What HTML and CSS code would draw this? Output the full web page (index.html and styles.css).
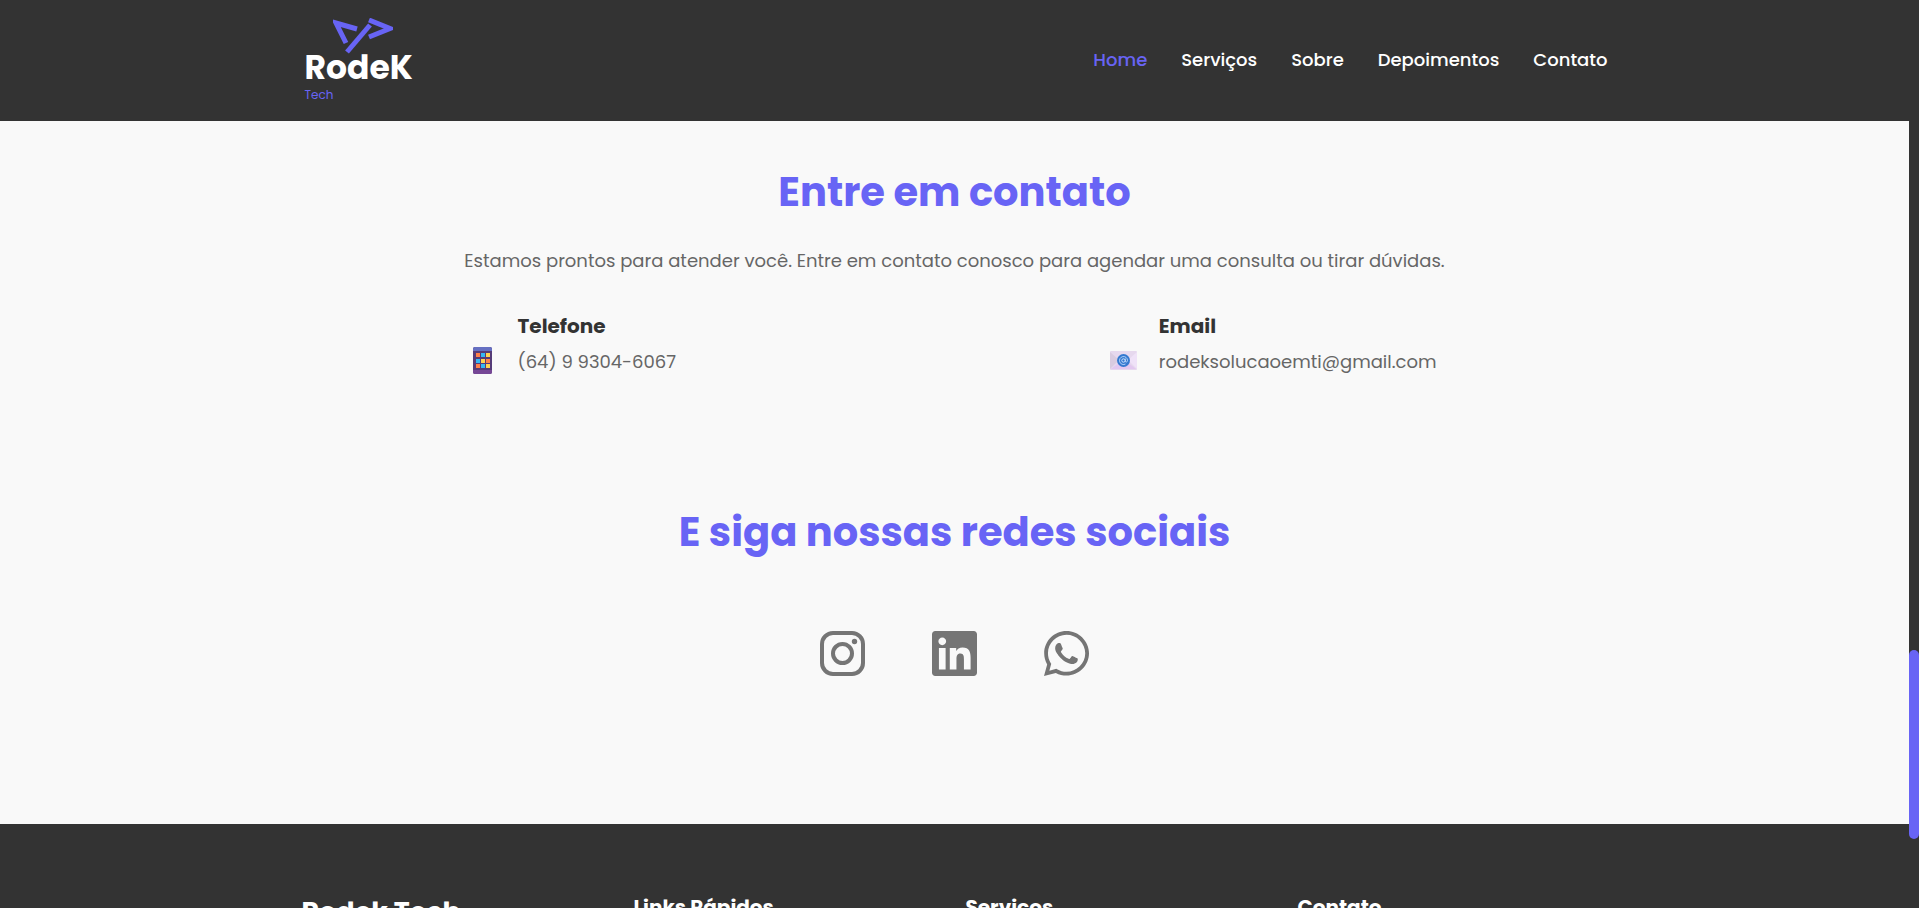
FILE: index.html
```html
<!DOCTYPE html>
<html lang="pt-BR">
<head>
<meta charset="utf-8">
<meta name="viewport" content="width=device-width, initial-scale=1">
<title>RodeK Tech</title>
<link rel="stylesheet" href="styles.css">
</head>
<body class="shell">
<div class="page">
  <header class="header">
    <div class="container header-row">
      <a class="logo" href="#" aria-label="RodeK Tech">
        <svg class="logo-mark" viewBox="0 0 60 36" aria-hidden="true">
          <g fill="none" stroke="#6864f5" stroke-width="5">
            <path d="M24 11 3 5 13 25"/>
            <path d="M14 34 37 7"/>
            <path d="M36 2 57 10.500 36 19"/>
          </g>
        </svg>
        <span class="logo-name">RodeK</span>
        <span class="logo-sub">Tech</span>
      </a>
      <nav class="nav">
        <a class="nav-link active" href="#home">Home</a>
        <a class="nav-link" href="#servicos">Serviços</a>
        <a class="nav-link" href="#sobre">Sobre</a>
        <a class="nav-link" href="#depoimentos">Depoimentos</a>
        <a class="nav-link" href="#contato">Contato</a>
      </nav>
    </div>
  </header>

  <main class="main" id="contato">
    <section class="contact">
      <h2 class="title">Entre em contato</h2>
      <p class="lead">Estamos prontos para atender você. Entre em contato conosco para agendar uma consulta ou tirar dúvidas.</p>
      <div class="contact-list">
        <div class="contact-item">
          <svg class="contact-icon" viewBox="0 0 27 27" aria-hidden="true">
            <rect x="4" y="0" width="19" height="27" rx="2" fill="#553c78"/>
            <path d="M6 0h15a2 2 0 0 1 2 2v2H4V2a2 2 0 0 1 2-2z" fill="#6670c2"/>
            <path d="M4 23h19v2a2 2 0 0 1-2 2H6a2 2 0 0 1-2-2z" fill="#764796"/>
            <path d="M7 6h4v4H7zM17 12h4v4h-4zM7 17h4v4H7z" fill="#ff8148"/>
            <path d="M12 6h4v4h-4zM7 12h4v4H7zM12 17h4v4h-4z" fill="#35b8f4"/>
            <path d="M17 6h4v4h-4zM12 12h4v4h-4zM17 17h4v4h-4z" fill="#ffd34e"/>
          </svg>
          <div>
            <h3 class="contact-title">Telefone</h3>
            <p class="contact-text">(64) 9 9304-6067</p>
          </div>
        </div>
        <div class="contact-item">
          <svg class="contact-icon" viewBox="0 0 27 27" aria-hidden="true">
            <rect x="0" y="4" width="27" height="19" rx="1" fill="#e6d8ee"/>
            <path d="M0 5 9 13 0 22z" fill="#d9cbe0"/>
            <path d="M27 5 18 13 27 22z" fill="#efe2f8"/>
            <path d="M1 22 10 15h7l9 7z" fill="#e2c8f0"/>
            <circle cx="13.500" cy="13.500" r="6.500" fill="#3479d0"/>
            <circle cx="13.500" cy="13.500" r="1.700" fill="none" stroke="#cfe4ff"/>
            <path d="M15.300 11.500v2.500c0 1.600 2.200 1.400 2.200-.5a4 4 0 1 0-2 3.500" fill="none" stroke="#cfe4ff" stroke-width=".8"/>
          </svg>
          <div>
            <h3 class="contact-title">Email</h3>
            <p class="contact-text">rodeksolucaoemti@gmail.com</p>
          </div>
        </div>
      </div>
    </section>

    <section class="social">
      <h2 class="title">E siga nossas redes sociais</h2>
      <div class="social-list">
        <a class="social-link" href="#" aria-label="Instagram">
          <svg viewBox="0 0 45 45" aria-hidden="true">
            <rect x="2" y="2" width="41" height="41" rx="11" fill="none" stroke="currentColor" stroke-width="4"/>
            <circle cx="22.500" cy="22.500" r="9.500" fill="none" stroke="currentColor" stroke-width="4"/>
            <circle cx="34.500" cy="10.500" r="2.700" fill="currentColor"/>
          </svg>
        </a>
        <a class="social-link" href="#" aria-label="LinkedIn">
          <svg viewBox="0 0 448 448" aria-hidden="true">
            <path fill="currentColor" fill-rule="evenodd" d="M416 0H31.900C14.300 0 0 14.500 0 32.300v383.400C0 433.500 14.300 448 31.900 448H416c17.600 0 32-14.500 32-32.300V32.300C448 14.500 433.600 0 416 0zM135.400 384H69V170.200h66.500V384zM102.200 141c-21.300 0-38.500-17.300-38.500-38.500S80.900 64 102.200 64c21.200 0 38.500 17.300 38.500 38.500 0 21.300-17.200 38.500-38.500 38.500zM384.300 384h-66.400V280c0-24.800-.5-56.700-34.500-56.700-34.600 0-39.900 27-39.900 54.900V384h-66.400V170.200h63.700v29.200h.9c8.900-16.800 30.600-34.500 62.900-34.500 67.200 0 79.700 44.300 79.700 101.900V384z"/>
          </svg>
        </a>
        <a class="social-link" href="#" aria-label="WhatsApp">
          <svg viewBox="0 0 448 448" aria-hidden="true">
            <path fill="currentColor" fill-rule="evenodd" d="M380.900 65.100C339 23.100 283.200 0 223.900 0 101.500 0 1.900 99.600 1.900 222c0 39.100 10.200 77.300 29.600 111L0 448l117.700-30.900c32.400 17.700 68.900 27 106.100 27h.1c122.300 0 224.100-99.600 224.100-222 0-59.300-25.200-115-67.100-157zm-157 341.600c-33.200 0-65.700-8.900-94-25.700l-6.700-4-69.800 18.300L72 327.200l-4.400-7c-18.500-29.400-28.200-63.300-28.200-98.200 0-101.700 82.800-184.500 184.600-184.500 49.300 0 95.600 19.200 130.400 54.100 34.800 34.900 56.200 81.200 56.100 130.500 0 101.800-84.900 184.600-186.600 184.600zm101.200-138.200c-5.500-2.800-32.800-16.200-37.900-18-5.100-1.900-8.800-2.800-12.500 2.800-3.700 5.600-14.300 18-17.600 21.800-3.200 3.700-6.500 4.200-12 1.400-32.600-16.300-54-29.100-75.500-66-5.700-9.800 5.700-9.100 16.300-30.300 1.800-3.700.9-6.900-.5-9.700-1.400-2.800-12.500-30.100-17.100-41.200-4.500-10.800-9.100-9.300-12.500-9.500-3.200-.2-6.900-.2-10.600-.2-3.700 0-9.700 1.400-14.800 6.900-5.100 5.600-19.400 19-19.400 46.300 0 27.300 19.900 53.700 22.600 57.400 2.800 3.700 39.100 59.700 94.800 83.800 35.200 15.200 49 16.500 66.600 13.900 10.700-1.600 32.800-13.400 37.400-26.400 4.600-13 4.600-24.100 3.200-26.400-1.300-2.500-5-3.900-10.500-6.600z"/>
          </svg>
        </a>
      </div>
    </section>
  </main>

  <footer class="footer">
    <div class="container footer-grid">
      <h3 class="footer-brand">Rodek Tech</h3>
      <h4 class="footer-title">Links Rápidos</h4>
      <h4 class="footer-title">Serviços</h4>
      <h4 class="footer-title">Contato</h4>
    </div>
  </footer>
</div>
<div class="rail" aria-hidden="true"><div class="rail-thumb"></div></div>
</body>
</html>
```

FILE: styles.css
```css
* {
  box-sizing: border-box;
  margin: 0;
  padding: 0;
}

.shell {
  display: flex;
  height: 100vh;
  overflow: hidden;
  background: #333;
  color: #333;
  font-family: Poppins, Inter, "Open Sans", sans-serif;
}

.page {
  flex: 1;
  min-width: 0;
  overflow: hidden;
}

.container {
  width: 100%;
  max-width: 1306px;
  margin: 0 auto;
}

.header {
  background: #333;
  padding: 18px 0 16px;
}

.header-row {
  display: flex;
  align-items: flex-start;
  justify-content: space-between;
}

.logo {
  display: flex;
  flex-direction: column;
  height: 87px;
  padding-left: 3px;
  text-decoration: none;
}

.logo-mark {
  width: 60px;
  height: 36px;
  margin-left: 28px;
}

.logo-name {
  margin-top: -4px;
  color: #fff;
  font-size: 33px;
  font-weight: 700;
  line-height: 36px;
}

.logo-sub {
  color: #6864f5;
  font-size: 12px;
  line-height: 18px;
}

.nav {
  display: flex;
  gap: 34px;
  padding-top: 30px;
}

.nav-link {
  color: #fff;
  font-size: 18px;
  font-weight: 500;
  line-height: 24px;
  text-decoration: none;
}

.nav-link.active {
  color: #6864f5;
}

.main {
  background: #f9f9f9;
}

.contact {
  max-width: 1000px;
  margin: 0 auto;
  padding: 41px 8px 0;
}

.title {
  color: #6864f5;
  font-size: 40px;
  font-weight: 700;
  line-height: 60px;
  text-align: center;
}

.lead {
  margin-top: 25px;
  color: #666;
  font-size: 18px;
  line-height: 28px;
  text-align: center;
}

.contact-list {
  display: flex;
  justify-content: space-between;
  margin-top: 35px;
  padding: 0 10px 0 6px;
}

.contact-item {
  display: flex;
  align-items: flex-end;
  gap: 22px;
}

.contact-icon {
  width: 27px;
  height: 27px;
  margin-bottom: 2px;
}

.contact-title {
  font-size: 20px;
  font-weight: 700;
  line-height: 32px;
}

.contact-text {
  margin-top: 6px;
  color: #666;
  font-size: 18px;
  line-height: 28px;
}

.social {
  padding: 126px 0 148px;
}

.social-list {
  display: flex;
  justify-content: center;
  gap: 67px;
  margin-top: 69px;
}

.social-link {
  display: flex;
  width: 45px;
  height: 45px;
  color: #757575;
}

.footer {
  background: #333;
  padding-top: 68px;
  color: #fff;
}

.footer-grid {
  display: grid;
  grid-template-columns: repeat(4, 1fr);
  gap: 22px;
}

.footer-brand {
  font-size: 27px;
  font-weight: 700;
  line-height: 40px;
}

.footer-title {
  font-size: 20px;
  font-weight: 700;
  line-height: 30px;
}

.rail {
  width: 10px;
  height: 100vh;
  display: grid;
  grid-template-rows: 650fr 189fr 69fr;
  background: #333;
}

.rail-thumb {
  grid-row: 2;
  border-radius: 5px;
  background: #6864f5;
}
```
